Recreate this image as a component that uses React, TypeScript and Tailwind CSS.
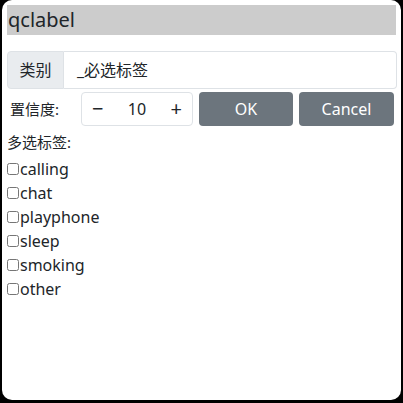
import React from "react";

export default function App() {
  const font = { fontFamily: '"Noto Sans", "Noto Sans CJK SC", sans-serif' };
  const items = ["calling", "chat", "playphone", "sleep", "smoking", "other"];
  return (
    <div className="w-[403px] h-[403px] bg-black" style={font}>
      <div className="ml-[2px] w-[399px] h-[400px] bg-white rounded-[10px] px-[5px] pt-[5px] text-[#212529]">
        <div className="h-[30px] bg-[#cccccc] text-[20px] leading-[30px] pl-[1px]">qclabel</div>
        <div className="mt-[16px] flex h-[38px] w-[390px]">
          <div className="w-[57px] flex items-center justify-center bg-[#e9ecef] border border-[#dee2e6] rounded-l-[4px] text-[16px]">类别</div>
          <div className="flex-1 flex items-center border border-l-0 border-[#dee2e6] rounded-r-[4px] pl-[13px] text-[16px]">_必选标签</div>
        </div>
        <div className="mt-[3px] flex items-center h-[34px]">
          <div className="w-[74px] pl-[3px] text-[15px]">置信度:</div>
          <div className="w-[112px] h-[34px] border border-[#dee2e6] rounded-[4px] flex items-center justify-between px-[10px] text-[16px]">
            <span className="text-[20px] leading-none">−</span>
            <span>10</span>
            <span className="text-[20px] leading-none">+</span>
          </div>
          <button className="ml-[6px] w-[94px] h-[34px] bg-[#6c757d] text-white rounded-[4px] text-[16px]">OK</button>
          <button className="ml-[6px] w-[95px] h-[34px] bg-[#6c757d] text-white rounded-[4px] text-[16px]">Cancel</button>
        </div>
        <div className="mt-[4px] text-[15px] leading-[24px]">多选标签:</div>
        <div className="mt-[3px] flex flex-col text-[16px] leading-[24px]">
          {items.map((t) => (
            <label key={t} className="flex items-center">
              <input type="checkbox" className="m-0 mr-[1px] w-[12px] h-[12px]" />
              <span>{t}</span>
            </label>
          ))}
        </div>
      </div>
    </div>
  );
}
